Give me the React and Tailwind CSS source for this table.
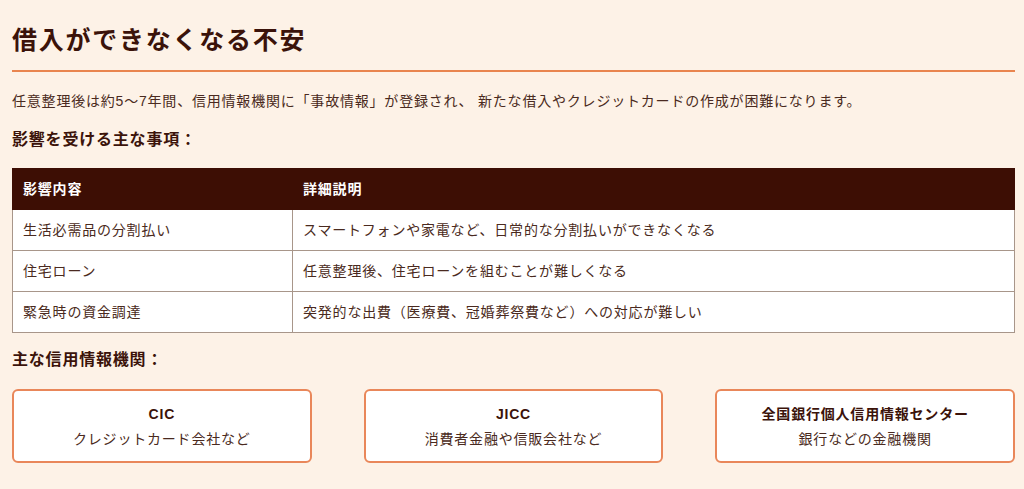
const rows = [
  ['生活必需品の分割払い', 'スマートフォンや家電など、日常的な分割払いができなくなる'],
  ['住宅ローン', '任意整理後、住宅ローンを組むことが難しくなる'],
  ['緊急時の資金調達', '突発的な出費（医療費、冠婚葬祭費など）への対応が難しい'],
]

const agencies = [
  { name: 'CIC', desc: 'クレジットカード会社など' },
  { name: 'JICC', desc: '消費者金融や信販会社など' },
  { name: '全国銀行個人信用情報センター', desc: '銀行などの金融機関' },
]

export default function App() {
  return (
    <div
      className="min-h-screen bg-[#fdf2e7] pl-3 pr-[9px] text-[#4a2a20] tracking-[0.05em]"
      style={{ fontFamily: '"Liberation Sans", "Noto Sans CJK JP", sans-serif' }}
    >
      {/* Title */}
      <h1 className="pt-6 pb-[14px] border-b-2 border-[#e9854f] text-[25px] leading-8 font-bold text-[#3b130a] tracking-[0.07em]">
        借入ができなくなる不安
      </h1>

      <p className="mt-[19px] text-[14px] leading-5">
        任意整理後は約5〜7年間、信用情報機関に「事故情報」が登録され、 新たな借入やクレジットカードの作成が困難になります。
      </p>

      <h2 className="mt-[17px] text-[16px] leading-6 font-bold text-[#3b130a]">影響を受ける主な事項：</h2>

      {/* Table */}
      <table className="mt-4 w-full border-collapse text-[14px]">
        <thead>
          <tr className="bg-[#3d0e04] text-white">
            <th className="w-[280px] h-[41px] px-[10px] text-left font-bold border border-[#3d0e04]">影響内容</th>
            <th className="h-[41px] px-[10px] text-left font-bold border border-[#3d0e04]">詳細説明</th>
          </tr>
        </thead>
        <tbody className="bg-white">
          {rows.map((r) => (
            <tr key={r[0]}>
              <td className="h-[41px] px-[10px] border border-[#a8968a]">{r[0]}</td>
              <td className="h-[41px] px-[10px] border border-[#a8968a]">{r[1]}</td>
            </tr>
          ))}
        </tbody>
      </table>

      <h2 className="mt-[15px] text-[16px] leading-6 font-bold text-[#3b130a]">主な信用情報機関：</h2>

      {/* Agencies */}
      <div className="mt-[17px] grid grid-cols-3 gap-[52px]">
        {agencies.map((a) => (
          <div
            key={a.name}
            className="h-[74px] flex flex-col items-center justify-center bg-white border-2 border-[#e9875a] rounded-md"
          >
            <div className="text-[14px] leading-5 font-bold text-[#3b130a]">{a.name}</div>
            <div className="mt-[5px] text-[14px] leading-5">{a.desc}</div>
          </div>
        ))}
      </div>
    </div>
  )
}
